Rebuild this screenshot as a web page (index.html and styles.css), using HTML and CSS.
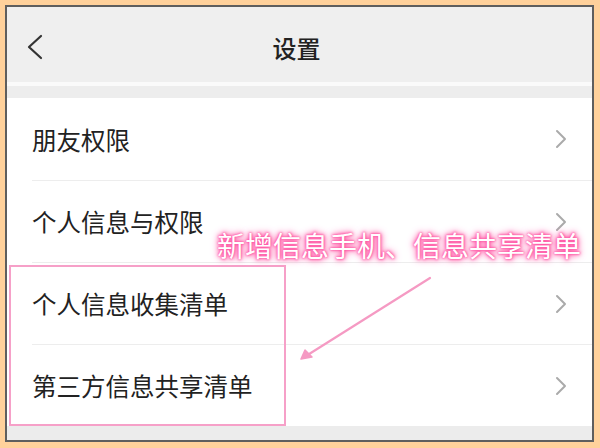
FILE: index.html
```html
<!DOCTYPE html>
<html lang="zh-CN">
<head>
<meta charset="utf-8">
<link rel="stylesheet" href="styles.css">
</head>
<body>
<div class="frame">
  <header class="topbar">
    <svg class="back" width="16" height="26" viewBox="0 0 16 26"><polyline points="14,2 2,13 14,24" fill="none" stroke="#333" stroke-width="2.2" stroke-linecap="round" stroke-linejoin="round"/></svg>
    <div class="title">设置</div>
  </header>
  <div class="gap-line"></div>
  <div class="gap"></div>
  <ul class="list">
    <li class="row"><span>朋友权限</span><svg class="chev" width="12" height="20" viewBox="0 0 12 20"><polyline points="2,2 10,10 2,18" fill="none" stroke="#aaa" stroke-width="2" stroke-linecap="round" stroke-linejoin="round"/></svg></li>
    <li class="row"><span>个人信息与权限</span><svg class="chev" width="12" height="20" viewBox="0 0 12 20"><polyline points="2,2 10,10 2,18" fill="none" stroke="#aaa" stroke-width="2" stroke-linecap="round" stroke-linejoin="round"/></svg></li>
    <li class="row"><span>个人信息收集清单</span><svg class="chev" width="12" height="20" viewBox="0 0 12 20"><polyline points="2,2 10,10 2,18" fill="none" stroke="#aaa" stroke-width="2" stroke-linecap="round" stroke-linejoin="round"/></svg></li>
    <li class="row"><span>第三方信息共享清单</span><svg class="chev" width="12" height="20" viewBox="0 0 12 20"><polyline points="2,2 10,10 2,18" fill="none" stroke="#aaa" stroke-width="2" stroke-linecap="round" stroke-linejoin="round"/></svg></li>
  </ul>
  <div class="bottom"></div>

  <div class="highlight"></div>
  <div class="note">新增信息手机、信息共享清单</div>
  <svg class="arrow" width="600" height="448" viewBox="0 0 600 448">
    <line x1="430" y1="278" x2="306" y2="356" stroke="#f59ac3" stroke-width="2.2" stroke-linecap="round"/>
    <polygon points="301,359 305,350 312,357" fill="#f59ac3" stroke="#f59ac3" stroke-width="1.5" stroke-linejoin="round"/>
  </svg>
</div>
</body>
</html>
```

FILE: styles.css
```css
html, body {
  margin: 0;
  padding: 0;
}
body {
  background: #ffd19b;
  width: 600px;
  height: 448px;
  overflow: hidden;
  font-family: "Noto Sans CJK SC", "Noto Sans", sans-serif;
}
.frame {
  margin: 5px 0 0 5px;
  width: 585px;
  height: 433px;
  border: 2px solid #5e5e5e;
  background: #efefef;
  display: flex;
  flex-direction: column;
}
.topbar {
  height: 75px;
  flex: none;
  position: relative;
  display: flex;
  align-items: center;
  justify-content: center;
  padding-top: 6px;
  box-sizing: border-box;
  background: #efefef;
}
.back {
  position: absolute;
  left: 20px;
  top: 27px;
}
.title {
  font-size: 24px;
  font-weight: 500;
  color: #222;
  line-height: 1;
  margin-right: 6px;
}
.gap-line {
  height: 4px;
  background: #fafafa;
  flex: none;
}
.gap {
  height: 12px;
  background: #ededed;
  flex: none;
}
.list {
  list-style: none;
  margin: 0;
  padding: 0;
  background: #fff;
  flex: none;
}
.row {
  height: 82px;
  box-sizing: border-box;
  margin-left: 25px;
  padding-right: 25px;
  display: flex;
  align-items: center;
  justify-content: space-between;
  border-top: 1px solid #ededed;
  font-size: 24.5px;
  color: #222;
}
.row:first-child {
  border-top: none;
}
.row span {
  line-height: 1;
  padding-top: 2px;
}
.chev {
  flex: none;
}
.bottom {
  flex: 1;
  background: #ececec;
}
.highlight {
  position: absolute;
  left: 9px;
  top: 265px;
  width: 273px;
  height: 157px;
  border: 2px solid #f6a0c8;
}
.note {
  position: absolute;
  left: 217px;
  top: 228px;
  font-size: 28px;
  line-height: 34px;
  color: #fff;
  white-space: nowrap;
  text-shadow: 0 0 2px #ff4fa0, 0 0 3px #ff4fa0, 0 0 5px #ff5fa8, 0 0 7px #ff7ab8, 0 0 10px #ff9ccb;
}
.arrow {
  position: absolute;
  left: 0;
  top: 0;
}
```
